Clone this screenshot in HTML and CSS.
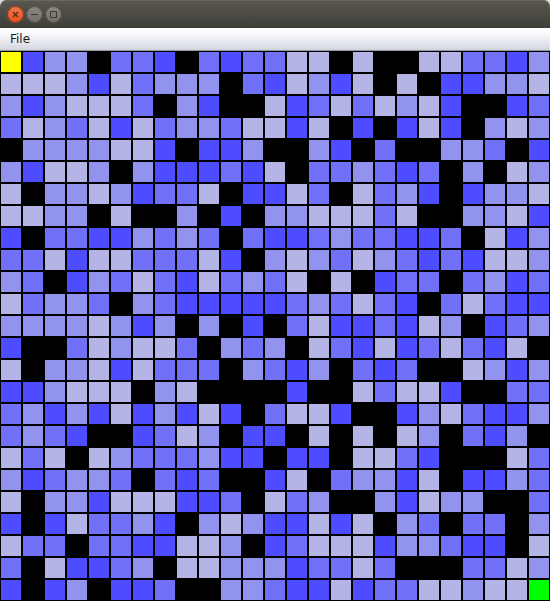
FILE: index.html
```
<!DOCTYPE html>
<html lang="en">
<head>
<meta charset="utf-8">
<title>Grid</title>
<link rel="stylesheet" href="styles.css">
</head>
<body>
<div class="window">
  <header class="titlebar">
    <button class="control close" aria-label="Close">
      <svg viewBox="0 0 17 17"><path d="M6 6l5 5M11 6l-5 5"/></svg>
    </button>
    <button class="control" aria-label="Minimize">
      <svg viewBox="0 0 17 17"><path d="M5 8.5h7"/></svg>
    </button>
    <button class="control" aria-label="Maximize">
      <svg viewBox="0 0 17 17"><path d="M5.5 5.5h6v6h-6z"/></svg>
    </button>
  </header>
  <nav class="menubar">
    <button class="menu">File</button>
  </nav>
  <main class="board" id="board"></main>
</div>
<script src="board.js"></script>
</body>
</html>
```
FILE: styles.css
```
* {
  box-sizing: border-box;
}

body {
  margin: 0;
  background: #d8d8d8;
  font-family: "DejaVu Sans", sans-serif;
}

.titlebar {
  display: flex;
  align-items: center;
  gap: 2px;
  height: 28px;
  padding: 1px 7px 0;
  border-radius: 7px 7px 0 0;
  background: linear-gradient(#5a5850, #3e3d38);
  box-shadow: inset 0 1px #69675f;
}

.control {
  width: 17px;
  height: 17px;
  padding: 0;
  border: 0;
  border-radius: 50%;
  background: linear-gradient(#8b8982, #706e67);
  box-shadow: inset 0 0 0 1px #4a4943;
}

.control svg {
  display: block;
  width: 17px;
  height: 17px;
  fill: none;
  stroke: #3a3934;
  stroke-width: 1;
}

.close {
  background: linear-gradient(#f4764e, #e2501f);
  box-shadow: inset 0 0 0 1px #7c3a22;
}

.close svg {
  stroke: #5b2a1a;
  stroke-width: 1.3;
}

.menubar {
  display: flex;
  height: 23px;
  border-bottom: 1px solid #90959d;
  background: linear-gradient(#ffffff 10%, #eceef2 50%, #d3d6de);
}

.menu {
  padding: 0 10px;
  border: 0;
  background: none;
  color: #1c1c1c;
  font: 12px/22px "DejaVu Sans", sans-serif;
}

.board {
  display: grid;
  grid-template-columns: repeat(25, 1fr);
  background: #000000;
}

.cell {
  aspect-ratio: 1;
  border: 1px solid #000000;
}

.wall { background: #000000; }
.level-1 { background: #b4b4e6; }
.level-2 { background: #9292ef; }
.level-3 { background: #7070f8; }
.level-4 { background: #4d4dff; }
.start { background: #ffff00; }
.goal { background: #00ff00; }
```
FILE: board.js
```
// S = start, G = goal, 0 = wall, 1-4 = terrain level
const rows = [
  "S422033403433110100113342",
  "1112413222034124101044221",
  "2421113024001431312140043",
  "3123141322311410404140212",
  "0222211404420024030022304",
  "2411202444341033234302012",
  "1022124331044130132404221",
  "1122010020402211131002214",
  "4033442323034432334430142",
  "3314113331402123123434112",
  "2304231341323101043303243",
  "1322302344444323134031344",
  "2222124202040314434120432",
  "4003121130232013414313410",
  "1022141333023420343001242",
  "4421110210000400131140033",
  "3242414241403114004213442",
  "3234004312044010101203420",
  "1310123332440440113400013",
  "2432230343004103224104423",
  "1022411144301320024122003",
  "4041332402124414102303302",
  "1330334411204311142234401",
  "3014432011222433130003312",
  "404204430022344143311211G"
];
const kinds = {
  S: "start", G: "goal", 0: "wall",
  1: "level-1", 2: "level-2", 3: "level-3", 4: "level-4"
};
const board = document.getElementById("board");
for (const code of rows.join("")) {
  const cell = document.createElement("div");
  cell.className = "cell " + kinds[code];
  board.append(cell);
}
```
